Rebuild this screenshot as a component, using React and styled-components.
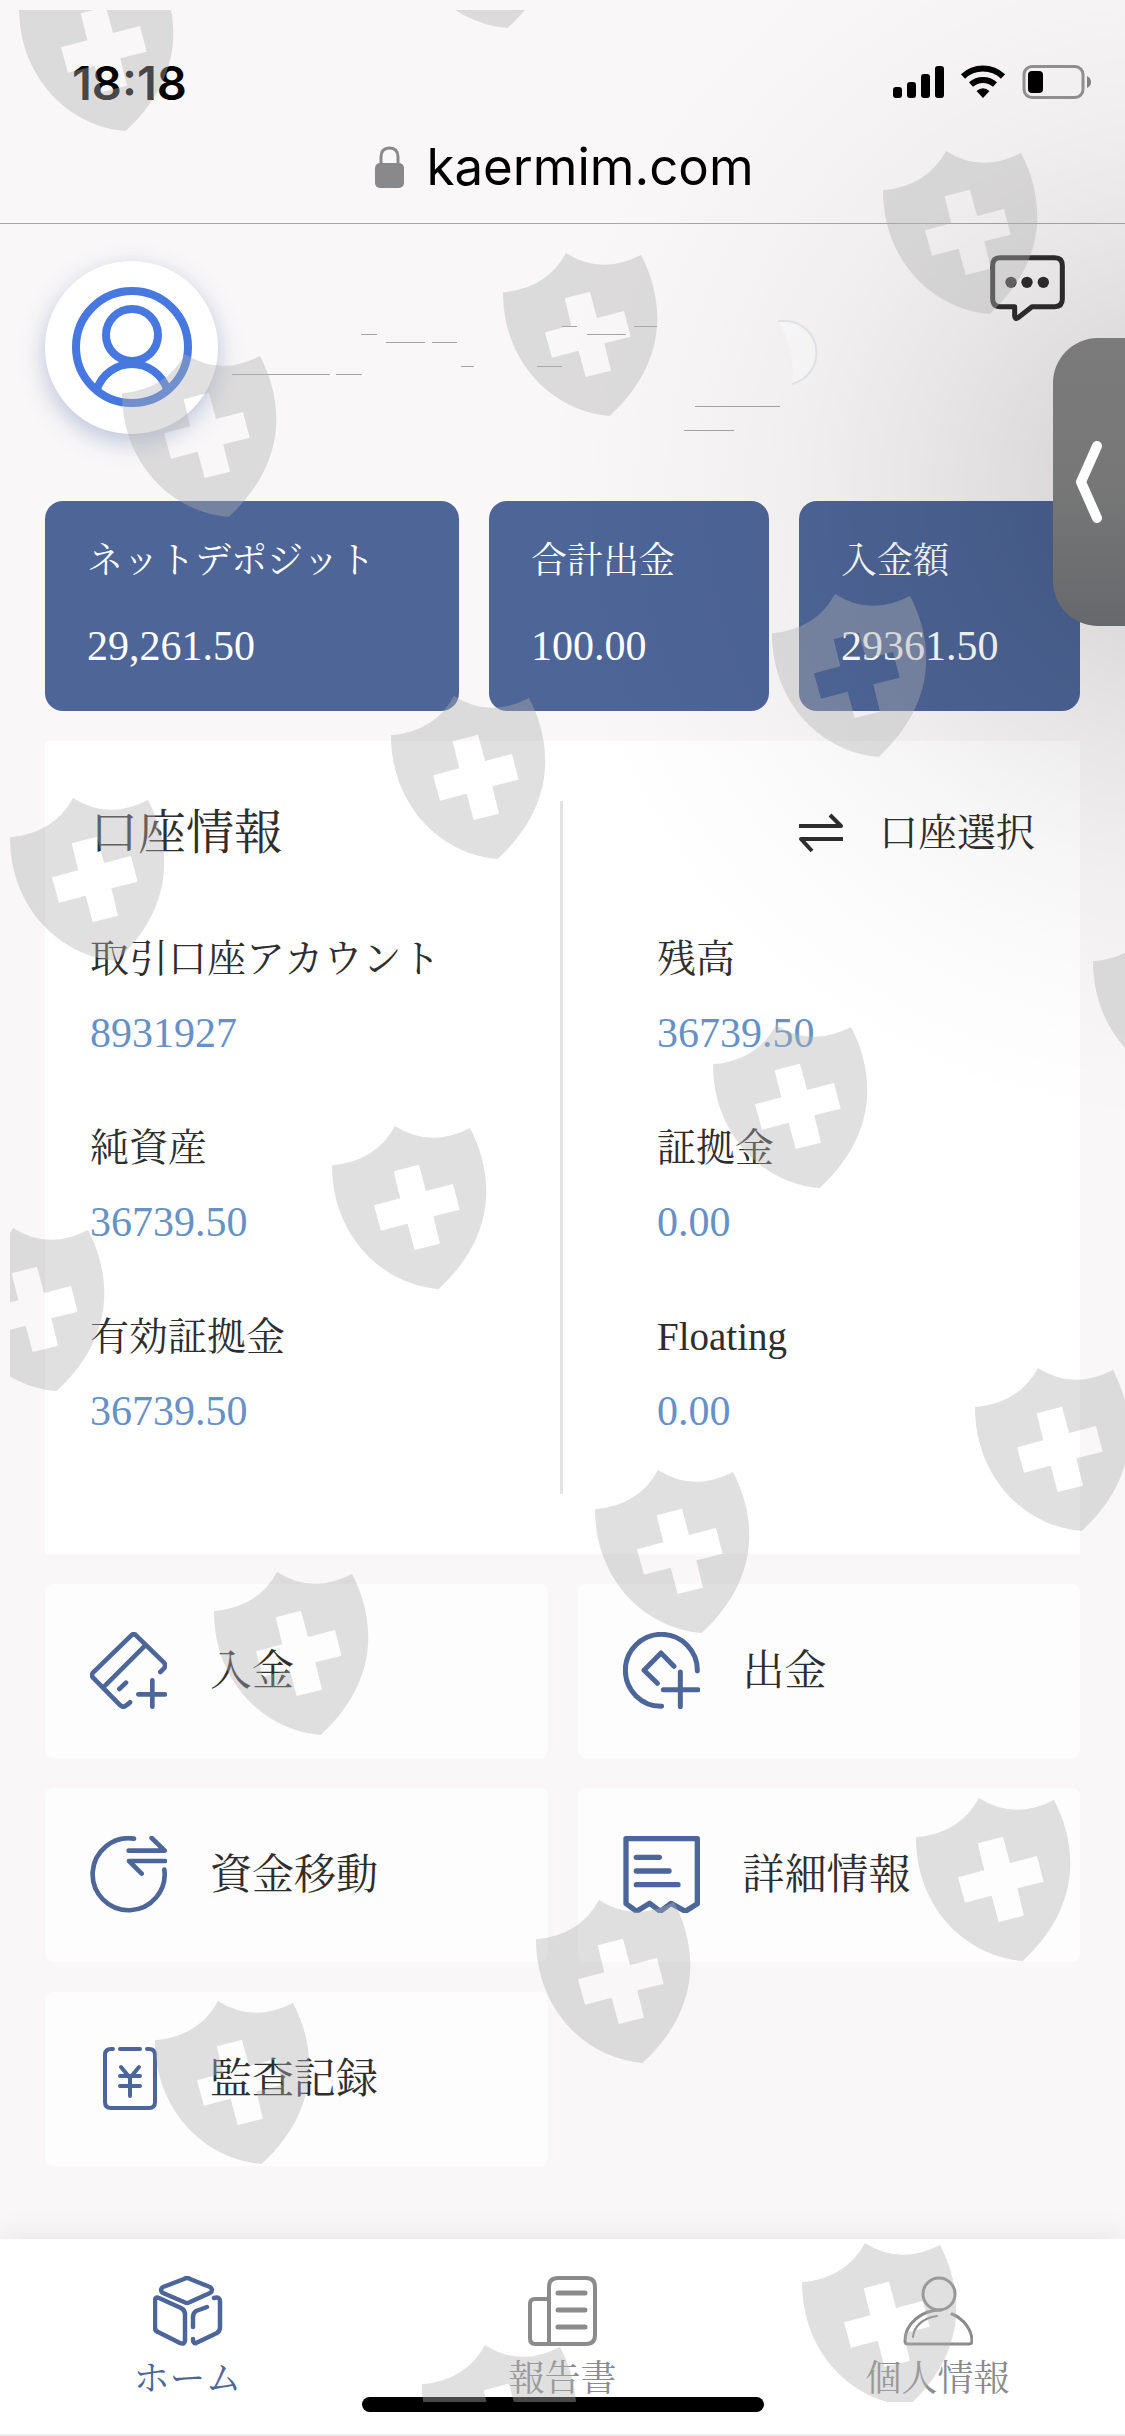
import React from 'react';
import styled, { createGlobalStyle } from 'styled-components';

const summary = [
  { label: 'ネットデポジット', value: '29,261.50' },
  { label: '合計出金', value: '100.00' },
  { label: '入金額', value: '29361.50' },
];

const leftItems = [
  { label: '取引口座アカウント', value: '8931927' },
  { label: '純資産', value: '36739.50' },
  { label: '有効証拠金', value: '36739.50' },
];

const rightItems = [
  { label: '残高', value: '36739.50' },
  { label: '証拠金', value: '0.00' },
  { label: 'Floating', value: '0.00' },
];

// top left corner of every shield on the watermark layer
const shields = [
  [19, -32], [401, -135], [883, 151], [503, 253], [122, 354],
  [772, 594], [391, 696], [10, 798], [1093, 922], [713, 1025],
  [332, 1126], [-50, 1228], [975, 1368], [595, 1470], [214, 1572],
  [916, 1798], [536, 1900], [155, 2001], [802, 2243], [422, 2345],
];

const DepositIcon = () => (
  <TileSvg viewBox="0 0 231 231" strokeWidth="14">
    <path d="M211 120L222 109Q229 100 222 92L138 10Q131 3 124 10L9 122Q3 130 9 137L91 220Q100 228 109 220L120 211" />
    <path d="M166 40L40 166M108 152L88 171M145 187H225M187 145V224" />
  </TileSvg>
);

const WithdrawIcon = () => (
  <TileSvg viewBox="0 0 231 231" strokeWidth="15">
    <path d="M223 117A108 108 0 1 0 116 223" />
    <path d="M153 103L114 63L63 115L103 154M121 173H225M172 120V224" />
  </TileSvg>
);

const TransferIcon = () => (
  <TileSvg viewBox="0 0 231 231" strokeWidth="14">
    <path d="M132 8A108 108 0 1 0 223 101" />
    <path d="M185 6L224 44H116M225 75H117L155 113" />
  </TileSvg>
);

const DetailIcon = () => (
  <TileSvg viewBox="0 0 231 231" strokeWidth="16">
    <path d="M9 8H223V203L187 226L144 202L112 226L80 202L41 226L9 203Z" />
    <path d="M40 64H109M40 105H138M40 146H165" />
  </TileSvg>
);

const AuditIcon = () => (
  <TileSvg viewBox="0 0 77 77" strokeWidth="4">
    <path d="M23 9H21Q15 9 15 15V62Q15 68 21 68H59Q65 68 65 62V15Q65 9 59 9H57M30 9H50" />
    <path d="M31 27L40 38L49 27M40 38V56M30 36H50M30 46H50" />
  </TileSvg>
);

const HomeIcon = () => (
  <NavSvg viewBox="0 0 70 70" strokeWidth="4.500">
    <path d="M31 3Q34 1 37 3L57 11Q61 14 57 17L37 26Q34 28 31 26L10 17Q6 14 10 11Z" />
    <path d="M6 22Q2 20 2 25V51Q2 55 5 56L27 67Q32 69 32 64V38Q32 34 28 32Z" />
    <path d="M61 22Q67 20 67 26V51Q67 55 64 57L43 67Q40 68 40 63M54 31L43 35Q40 37 40 41V51" />
  </NavSvg>
);

const ReportIcon = () => (
  <NavSvg viewBox="0 0 70 70" strokeWidth="4">
    <path d="M21 68V11Q21 2 30 2H58Q67 2 67 11V59Q67 68 58 68H7Q2 68 2 62V28Q2 23 7 23H20" />
    <path d="M30 17H57M30 34H57M30 51H57" strokeWidth="5" />
  </NavSvg>
);

const PersonIcon = () => (
  <NavSvg viewBox="0 0 70 70" strokeWidth="3">
    <circle cx="36" cy="18" r="16" />
    <path d="M38 34C18 34 2 48 2 65Q2 68 5 68H66Q69 68 69 65C69 54 61 43 49 38" />
    <path d="M34 40C20 42 11 50 10 61" strokeWidth="2" />
  </NavSvg>
);

const tiles = [
  { name: '入金', Icon: DepositIcon },
  { name: '出金', Icon: WithdrawIcon },
  { name: '資金移動', Icon: TransferIcon },
  { name: '詳細情報', Icon: DetailIcon },
  { name: '監査記録', Icon: AuditIcon },
];

const tabs = [
  { name: 'ホーム', Icon: HomeIcon, active: true },
  { name: '報告書', Icon: ReportIcon },
  { name: '個人情報', Icon: PersonIcon },
];

const StatusIcons = () => (
  <svg width="200" height="36" viewBox="0 0 200 36" aria-hidden="true">
    <rect x="0" y="23" width="9" height="11" rx="3" />
    <rect x="14" y="18" width="9" height="16" rx="3" />
    <rect x="28" y="10" width="9" height="24" rx="3" />
    <rect x="42" y="2" width="9" height="32" rx="3" />
    <g fill="none" stroke="#000" strokeWidth="6">
      <path d="M70 12.5A29 29 0 0 1 110 12.5" />
      <path d="M78 20.5A18 18 0 0 1 102 20.5" />
    </g>
    <path d="M83.500 27Q90 21.500 96.500 27L90 34Z" />
    <rect x="131" y="2.500" width="59" height="31" rx="8" fill="none" stroke="#939393" strokeWidth="3" />
    <rect x="135" y="7" width="15" height="22" rx="4" />
    <path d="M194 12Q198 14 198 18T194 24Z" fill="#858585" />
  </svg>
);

const LockIcon = () => (
  <svg width="29" height="42" viewBox="0 0 29 42" aria-hidden="true">
    <path d="M6 20V11Q6 2 14.500 2T23 11V20" fill="none" stroke="#89898b" strokeWidth="3" />
    <rect x="0" y="17" width="29" height="25" rx="5" fill="#89898b" />
  </svg>
);

const UserIcon = () => (
  <svg width="120" height="120" viewBox="0 0 120 120" fill="none" stroke="#4778df" strokeWidth="8" aria-hidden="true">
    <circle cx="60" cy="60" r="56" />
    <circle cx="60" cy="48" r="26" />
    <path d="M25 102A37 37 0 0 1 95 102" />
  </svg>
);

const NameTraces = () => (
  <svg width="590" height="170" viewBox="232 263 590 170" aria-hidden="true">
    <path
      d="M361 335.500H377M386 343.500H425M432 343.500H457M461 367.500H474M537 367.500H562M232 375.500H330M336 375.500H362M562 327.500H577M587 335.500H626M634 327.500H657M695 407.500H780M684 431.500H734"
      stroke="#a6a4a5"
      strokeWidth="1"
    />
    <path d="M778 322H787A32 32 0 0 1 792 385Q796 350 778 322Z" fill="#fcfcfc" />
    <path d="M778 322H787A32 32 0 0 1 792 385" fill="none" stroke="#e6e8ec" strokeWidth="2" />
  </svg>
);

const ChatIcon = () => (
  <svg width="75" height="67" viewBox="0 0 225 201" aria-hidden="true">
    <path
      d="M30 8H194Q217 8 217 31V132Q217 155 194 155H126L84 188Q75 194 74 184V155H30Q8 155 8 132V31Q8 8 30 8Z"
      fill="none"
      stroke="#2e2e2e"
      strokeWidth="15"
      strokeLinejoin="round"
    />
    <g fill="#2e2e2e">
      <circle cx="63" cy="82" r="17" />
      <circle cx="111" cy="82" r="17" />
      <circle cx="160" cy="82" r="17" />
    </g>
  </svg>
);

const SwapIcon = () => (
  <svg width="46" height="40" viewBox="0 0 46 40" fill="none" stroke="#2e2e2e" strokeWidth="4" strokeLinejoin="round" aria-hidden="true">
    <path d="M1 13H43L32 2M45 26H3L14 38" />
  </svg>
);

const Watermark = () => (
  <WatermarkLayer aria-hidden="true">
    <defs>
      <path
        id="shield"
        fillRule="evenodd"
        transform="scale(0.3333) translate(-38 -39)"
        d="M38 157Q170 145 227 39Q333 107 452 45C520 175 540 360 358 528C190 515 38 370 38 157ZM223 175L299 155L320 234L401 213L421 290L342 310L362 392L286 411L265 332L185 353L164 277L243 256Z"
      />
    </defs>
    {shields.map(([x, y]) => (
      <use key={`${x},${y}`} href="#shield" x={x - 10} y={y - 10} />
    ))}
  </WatermarkLayer>
);

const ItemList = ({ items }) => (
  <List>
    {items.map((item) => (
      <Item key={item.label}>
        <ItemLabel>{item.label}</ItemLabel>
        <ItemValue>{item.value}</ItemValue>
      </Item>
    ))}
  </List>
);

const App = () => (
  <Screen>
    <GlobalStyle />
    <BrowserBar>
      <StatusRow>
        <Clock>18:18</Clock>
        <StatusIcons />
      </StatusRow>
      <Address>
        <LockIcon />
        kaermim.com
      </Address>
    </BrowserBar>

    <Main>
      <Profile>
        <Avatar>
          <UserIcon />
        </Avatar>
        <NameTraces />
        <ChatButton type="button" aria-label="チャット">
          <ChatIcon />
        </ChatButton>
      </Profile>

      <Summary>
        {summary.map((card) => (
          <SummaryCard key={card.label}>
            <SummaryLabel>{card.label}</SummaryLabel>
            <SummaryValue>{card.value}</SummaryValue>
          </SummaryCard>
        ))}
      </Summary>

      <Panel>
        <Column>
          <PanelTitle>口座情報</PanelTitle>
          <ItemList items={leftItems} />
        </Column>
        <Column $divided>
          <SelectButton type="button">
            <SwapIcon />
            口座選択
          </SelectButton>
          <ItemList items={rightItems} />
        </Column>
      </Panel>

      <Tiles>
        {tiles.map(({ name, Icon }) => (
          <Tile key={name} href="#">
            <Icon />
            {name}
          </Tile>
        ))}
      </Tiles>
    </Main>

    <BottomBar>
      <Tabs>
        {tabs.map(({ name, Icon, active }) => (
          <Tab key={name} href="#" $active={active}>
            <Icon />
            {name}
          </Tab>
        ))}
      </Tabs>
      <HomeIndicator />
    </BottomBar>

    <Shade />
    <DrawerButton type="button" aria-label="開く">
      <svg width="26" height="82" viewBox="0 0 26 82" fill="none" stroke="#fff" strokeWidth="10" strokeLinecap="round" strokeLinejoin="round">
        <path d="M21 5L5 41L21 77" />
      </svg>
    </DrawerButton>
    <Watermark />
  </Screen>
);

const GlobalStyle = createGlobalStyle`
  * {
    box-sizing: border-box;
  }

  body {
    margin: 0;
    background-color: #f9f7f8;
    color: #2e2e2e;
    font-family: 'Liberation Serif', 'Noto Serif CJK JP', 'Noto Sans CJK JP', serif;
  }

  button {
    padding: 0;
    border: 0;
    background: none;
    color: inherit;
    font: inherit;
    cursor: pointer;
  }

  a {
    color: inherit;
    text-decoration: none;
  }

  svg {
    display: block;
    flex-shrink: 0;
  }
`;

const Screen = styled.div`
  position: relative;
  display: flex;
  flex-direction: column;
  min-height: 100vh;
  overflow: hidden;
`;

const BrowserBar = styled.header`
  display: flex;
  flex-direction: column;
  gap: 28px;
  padding: 52px 32px 29px 72px;
  border-bottom: 1px solid #a9a9a9;
  color: #000;
  font-family: Inter, 'Liberation Sans', sans-serif;
`;

const StatusRow = styled.div`
  display: flex;
  align-items: center;
  justify-content: space-between;
  height: 60px;
`;

const Clock = styled.span`
  font-size: 47px;
  font-weight: 600;
`;

const Address = styled.div`
  display: flex;
  align-items: center;
  justify-content: center;
  gap: 22px;
  height: 54px;
  padding-right: 36px;
  font-size: 51px;
  font-weight: 400;
  line-height: 54px;
`;

const Main = styled.main`
  flex-grow: 1;
  padding: 31px 45px 73px;
`;

const Profile = styled.div`
  display: flex;
  align-items: center;
  gap: 14px;
  height: 184px;
  margin-bottom: 62px;
`;

const Avatar = styled.div`
  display: flex;
  align-items: center;
  justify-content: center;
  width: 173px;
  height: 173px;
  flex-shrink: 0;
  border-radius: 50%;
  background-color: #fff;
  box-shadow: 0 8px 24px rgba(71, 99, 160, 0.35);
`;

const ChatButton = styled.button`
  align-self: flex-start;
  margin-left: auto;
  margin-right: 15px;
`;

const Summary = styled.div`
  display: grid;
  grid-template-columns: 414fr 280fr 281fr;
  gap: 30px;
  margin-bottom: 30px;
`;

const SummaryCard = styled.div`
  height: 210px;
  padding: 32px 0 0 42px;
  border-radius: 18px;
  background-color: #4d6597;
  color: #fff;
  white-space: nowrap;
`;

const SummaryLabel = styled.div`
  margin-bottom: 27px;
  font-size: 36px;
  line-height: 56px;
`;

const SummaryValue = styled.div`
  font-size: 42px;
  line-height: 60px;
`;

const Panel = styled.section`
  display: grid;
  grid-template-columns: 515fr 520fr;
  margin-bottom: 30px;
  padding: 60px 0;
  background-color: #fff;
`;

const Column = styled.div`
  display: flex;
  flex-direction: column;
  gap: 68px;
  padding: 2px 45px 59px ${({ $divided }) => ($divided ? '94px' : '45px')};
  border-left: ${({ $divided }) => ($divided ? '3px solid #e3e3e3' : '0')};
`;

const PanelTitle = styled.h1`
  margin: 0;
  font-size: 48px;
  font-weight: inherit;
  line-height: 60px;
`;

const SelectButton = styled.button`
  display: flex;
  align-items: center;
  align-self: flex-end;
  gap: 35px;
  font-size: 39px;
  line-height: 60px;
`;

const List = styled.dl`
  display: flex;
  flex-direction: column;
  gap: 63px;
  margin: 0;
`;

const Item = styled.div`
  display: flex;
  flex-direction: column;
  gap: 22px;
`;

const ItemLabel = styled.dt`
  font-size: 39px;
  line-height: 56px;
`;

const ItemValue = styled.dd`
  margin: 0;
  color: #6691c7;
  font-size: 42px;
  line-height: 48px;
`;

const Tiles = styled.nav`
  display: grid;
  grid-template-columns: 1fr 1fr;
  gap: 30px;
`;

const Tile = styled.a`
  display: flex;
  align-items: center;
  gap: 43px;
  height: 174px;
  padding: 0 0 1px 45px;
  border-radius: 8px;
  background-color: #fdfdfd;
  font-size: 42px;
  line-height: 60px;
`;

const TileSvg = styled.svg`
  width: 77px;
  height: 77px;
  fill: none;
  stroke: #4c6699;
  stroke-linecap: round;
  stroke-linejoin: round;
`;

const BottomBar = styled.footer`
  display: flex;
  flex-direction: column;
  align-items: center;
  padding: 37px 0 22px;
  border-bottom: 2px solid #ececec;
  background-color: #fff;
  box-shadow: 0 -2px 30px rgba(0, 0, 0, 0.08);
`;

const Tabs = styled.nav`
  display: grid;
  grid-template-columns: repeat(3, 1fr);
  width: 100%;
`;

const Tab = styled.a`
  display: flex;
  flex-direction: column;
  align-items: center;
  gap: 12px;
  color: ${({ $active }) => ($active ? '#4c6699' : '#8b8b8b')};
  font-size: 36px;
  line-height: 42px;
`;

const NavSvg = styled.svg`
  width: 70px;
  height: 70px;
  fill: none;
  stroke: currentColor;
  stroke-linecap: round;
  stroke-linejoin: round;
`;

const HomeIndicator = styled.div`
  width: 402px;
  height: 15px;
  margin-top: -3px;
  border-radius: 8px;
  background-color: #000;
`;

const Shade = styled.div`
  position: absolute;
  top: 0;
  right: 0;
  width: 600px;
  height: 1200px;
  background: radial-gradient(
    circle at 655px 490px,
    rgba(0, 0, 0, 0.16) 0,
    rgba(0, 0, 0, 0.13) 100px,
    rgba(0, 0, 0, 0.07) 260px,
    rgba(0, 0, 0, 0.035) 380px,
    rgba(0, 0, 0, 0.015) 500px,
    rgba(0, 0, 0, 0) 640px
  );
  pointer-events: none;
`;

const DrawerButton = styled.button`
  && {
    position: absolute;
    top: 338px;
    right: 0;
    display: flex;
    align-items: center;
    justify-content: center;
    width: 72px;
    height: 288px;
    border-radius: 45px 0 0 45px;
    background: linear-gradient(#7b7b7b, #777 50%, #66696c);
  }
`;

const WatermarkLayer = styled.svg`
  position: absolute;
  top: 10px;
  left: 10px;
  width: calc(100% - 10px);
  height: calc(100% - 44px);
  overflow: hidden;
  fill: rgba(178, 178, 178, 0.4);
  pointer-events: none;
`;

export default App;
